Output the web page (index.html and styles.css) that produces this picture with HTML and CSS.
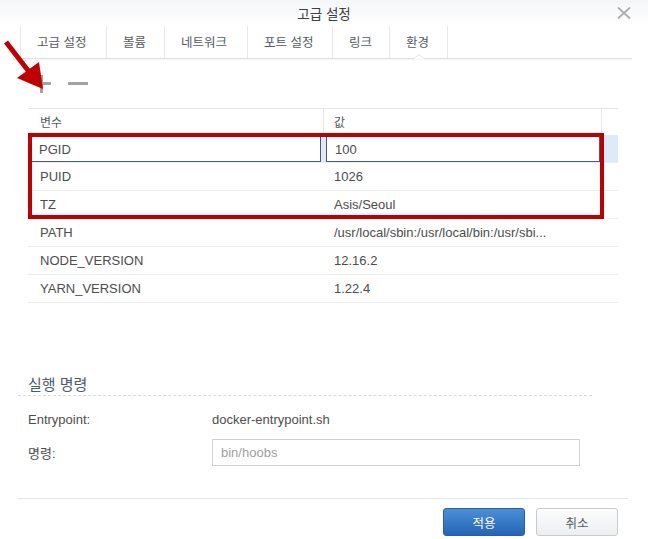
FILE: index.html
```html
<!DOCTYPE html>
<html lang="ko">
<head>
  <meta charset="UTF-8">
  <meta name="viewport" content="width=device-width, initial-scale=1.0">
  <title>고급 설정</title>
  <link rel="stylesheet" href="styles.css">
</head>
<body>
  <div class="dialog">
    <!-- 제목 -->
    <div class="titlebar">
      <span class="title">고급 설정</span>
      <svg class="close" width="14" height="12" viewBox="0 0 14 12">
        <path d="M1 0.5 L13 11.5 M13 0.5 L1 11.5" stroke="#a9acb0" stroke-width="1.8" fill="none"/>
      </svg>
    </div>

    <!-- 탭 -->
    <div class="tabs">
      <div class="tab">고급 설정</div>
      <div class="tab">볼륨</div>
      <div class="tab">네트워크</div>
      <div class="tab">포트 설정</div>
      <div class="tab">링크</div>
      <div class="tab active">환경</div>
    </div>

    <div class="toolbar">
      <span class="icon-plus"></span>
      <span class="icon-minus"></span>
    </div>

    <!-- 환경 변수 -->
    <div class="grid">
      <div class="row head">
        <div class="cell name">변수</div>
        <div class="cell value">값</div>
        <div class="cell spare"></div>
      </div>
      <div class="row selected">
        <div class="cell name"><div class="editor">PGID</div></div>
        <div class="cell value"><div class="editor">100</div></div>
        <div class="cell spare"></div>
      </div>
      <div class="row">
        <div class="cell name">PUID</div>
        <div class="cell value">1026</div>
        <div class="cell spare"></div>
      </div>
      <div class="row">
        <div class="cell name">TZ</div>
        <div class="cell value">Asis/Seoul</div>
        <div class="cell spare"></div>
      </div>
      <div class="row">
        <div class="cell name">PATH</div>
        <div class="cell value">/usr/local/sbin:/usr/local/bin:/usr/sbi...</div>
        <div class="cell spare"></div>
      </div>
      <div class="row">
        <div class="cell name">NODE_VERSION</div>
        <div class="cell value">12.16.2</div>
        <div class="cell spare"></div>
      </div>
      <div class="row">
        <div class="cell name">YARN_VERSION</div>
        <div class="cell value">1.22.4</div>
        <div class="cell spare"></div>
      </div>
    </div>

    <!-- 실행 명령 -->
    <div class="section">
      <div class="section-title">실행 명령</div>
      <div class="field">
        <span class="label">Entrypoint:</span>
        <span class="text">docker-entrypoint.sh</span>
      </div>
      <div class="field">
        <span class="label">명령:</span>
        <input class="input" type="text" placeholder="bin/hoobs">
      </div>
    </div>

    <div class="footer">
      <button class="btn primary">적용</button>
      <button class="btn">취소</button>
    </div>

    <!-- 표시 -->
    <div class="mark-box"></div>
    <svg class="mark-arrow" width="50" height="60" viewBox="0 0 50 60">
      <path d="M6 10 L30 41" stroke="#c00000" stroke-width="5" fill="none"/>
      <polygon points="17,46 39,30 43,57" fill="#c00000"/>
    </svg>
  </div>
</body>
</html>
```

FILE: styles.css
```css
body {
  margin: 0;
  padding: 0;
  background-color: #ffffff;
  font-family: "Liberation Sans", "Noto Sans CJK KR", sans-serif;
  font-size: 13px;
  color: #4d4d4d;
}

.dialog {
  position: relative;
  width: 648px;
  height: 539px;
  background-color: #ffffff;
}

.titlebar {
  position: relative;
  height: 26px;
  line-height: 26px;
  text-align: center;
  background: linear-gradient(#f5f6f8, #ffffff);
}

.title {
  font-family: "Noto Sans CJK KR", sans-serif;
  font-size: 13.5px;
  color: #3a3f45;
}

.close {
  position: absolute;
  top: 7px;
  right: 17px;
}

.tabs {
  display: flex;
  height: 32px;
  margin: 0 16px 0 20px;
  border-bottom: 1px solid #dde1e5;
  box-shadow: 0 1px 1px rgba(0, 0, 0, 0.04);
  border-left: 1px solid #e6e8ea;
}

.tab {
  position: relative;
  padding: 0 16px;
  line-height: 32px;
  font-family: "Noto Sans CJK KR", sans-serif;
  font-size: 12.5px;
  color: #555a60;
  border-right: 1px solid #e6e8ea;
}

.tab:nth-child(1) { width: 53px; }
.tab:nth-child(2) { width: 25px; }
.tab:nth-child(3) { width: 50px; }
.tab:nth-child(4) { width: 52px; }
.tab:nth-child(5) { width: 24px; }
.tab:nth-child(6) { width: 25px; }

.tab.active::after {
  content: "";
  position: absolute;
  left: 50%;
  bottom: -1px;
  margin-left: -6px;
  border-left: 6px solid transparent;
  border-right: 6px solid transparent;
  border-bottom: 5px solid #dde1e5;
}

.tab.active::before {
  content: "";
  position: absolute;
  left: 50%;
  bottom: -1px;
  margin-left: -5px;
  border-left: 5px solid transparent;
  border-right: 5px solid transparent;
  border-bottom: 4px solid #ffffff;
  z-index: 1;
}

.toolbar {
  display: flex;
  align-items: center;
  gap: 17px;
  height: 49px;
  padding-left: 33px;
}

.icon-plus {
  position: relative;
  width: 18px;
  height: 18px;
}

.icon-plus::before,
.icon-plus::after {
  content: "";
  position: absolute;
  background-color: #a3a3a3;
}

.icon-plus::before {
  left: 0;
  top: 7px;
  width: 18px;
  height: 3px;
}

.icon-plus::after {
  left: 7px;
  top: 0;
  width: 3px;
  height: 18px;
}

.icon-minus {
  width: 20px;
  height: 3px;
  background-color: #a3a3a3;
}

.grid {
  margin-left: 28px;
  width: 590px;
  border-top: 1px solid #e3e5e8;
}

.row {
  display: flex;
  height: 27px;
  line-height: 28px;
  border-bottom: 1px solid #ebedef;
}

.row.head {
  height: 26px;
  line-height: 26px;
  border-bottom: none;
}

.row.head .cell {
  font-family: "Noto Sans CJK KR", sans-serif;
  font-size: 12px;
  color: #555a60;
}

.row.head .name,
.row.head .value {
  border-right: 1px solid #e6e8ea;
}

.cell {
  box-sizing: border-box;
  padding: 0 10px 0 12px;
  white-space: nowrap;
  overflow: hidden;
}

.name {
  width: 296px;
  padding-left: 12px;
}

.value {
  width: 278px;
  padding-left: 10px;
}

.spare {
  width: 16px;
  padding: 0;
}

.row.selected {
  background-color: #dfeaf8;
}

.row.selected .cell {
  padding: 1px 0 0 2px;
}

.row.selected .value {
  padding-left: 2px;
}

.editor {
  box-sizing: border-box;
  height: 26px;
  line-height: 25px;
  padding-left: 8px;
  background-color: #ffffff;
  border: 1px solid #4a5a78;
}

.row.selected .name .editor {
  width: 291px;
}

.row.selected .value .editor {
  width: 274px;
}

.section {
  margin: 70px 0 0 18px;
  width: 574px;
}

.section-title {
  height: 22px;
  line-height: 22px;
  padding-left: 10px;
  font-family: "Noto Sans CJK KR", sans-serif;
  font-size: 15px;
  color: #4a5b6e;
  border-bottom: 1px dashed #d8dce0;
}

.field {
  display: flex;
  align-items: center;
  height: 33px;
  padding-left: 10px;
}

.field:nth-child(2) {
  margin-top: 7px;
}

.label {
  width: 184px;
}

.input {
  box-sizing: border-box;
  width: 368px;
  height: 27px;
  padding: 0 8px;
  border: 1px solid #cfd2d5;
  font-family: "Liberation Sans", sans-serif;
  font-size: 13px;
  color: #4d4d4d;
  outline: none;
}

.input::placeholder {
  color: #a0a0a0;
}

.footer {
  display: flex;
  justify-content: flex-end;
  gap: 11px;
  margin: 29px 20px 0 18px;
  padding: 9px 10px 0 0;
  border-top: 1px solid #e3e5e8;
}

.btn {
  width: 82px;
  height: 28px;
  font-family: "Noto Sans CJK KR", sans-serif;
  font-size: 12.5px;
  color: #555a60;
  background: linear-gradient(#fdfdfd, #eceef0);
  border: 1px solid #c8cbce;
  border-radius: 3px;
  cursor: pointer;
}

.btn.primary {
  margin-left: 2px;
  color: #ffffff;
  background: linear-gradient(#4a8fd8, #2664b6);
  border-color: #2a5fa8;
}

/* 빨간 표시 */
.mark-box {
  position: absolute;
  left: 28px;
  top: 133px;
  width: 568px;
  height: 78px;
  border: 4px solid #c00000;
  pointer-events: none;
}

.mark-arrow {
  position: absolute;
  left: 0;
  top: 32px;
  pointer-events: none;
}
```
